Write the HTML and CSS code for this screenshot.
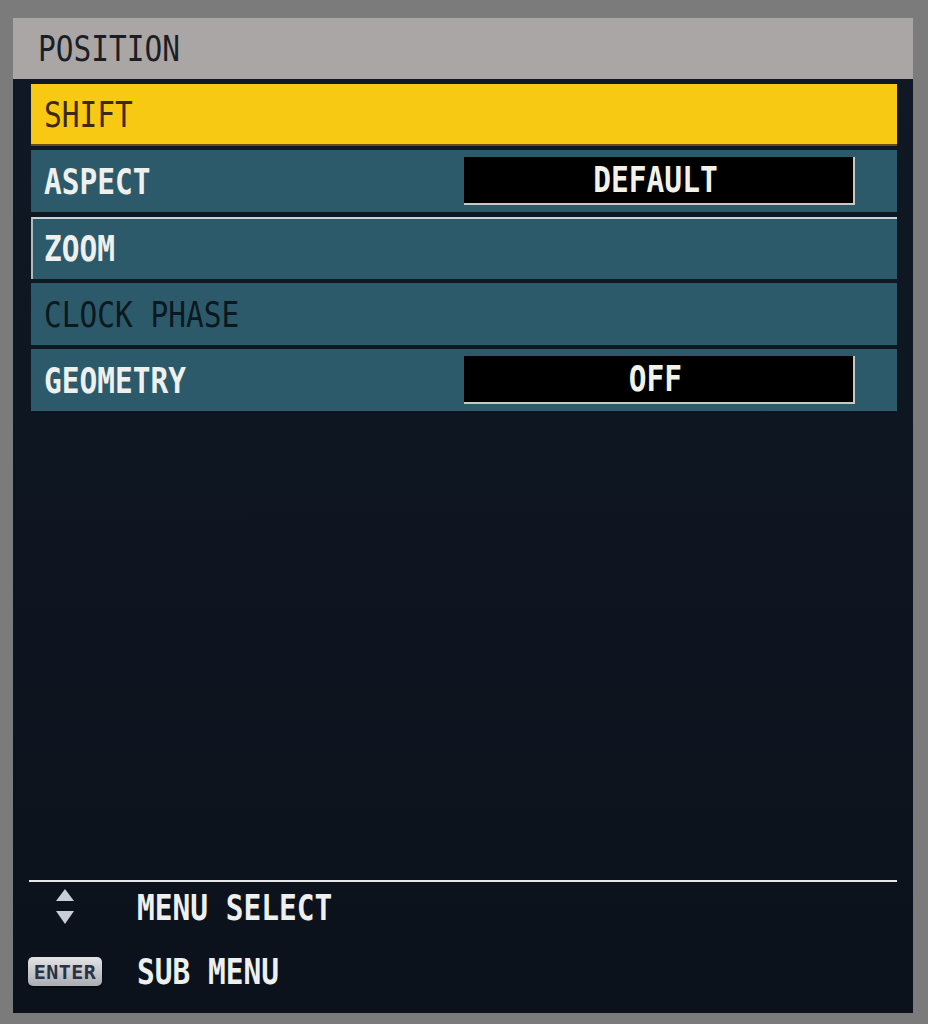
FILE: index.html
```html
<!DOCTYPE html>
<html lang="en">
<head>
  <meta charset="UTF-8" />
  <meta name="viewport" content="width=device-width, initial-scale=1.0"/>
  <title>Position | OSD Menu</title>
  <link rel="stylesheet" href="styles.css">
</head>
<body>
  <div class="osd-panel">
    <header class="osd-title">
      <span class="txt">POSITION</span>
    </header>

    <div class="osd-body">
      <ul class="menu-list">
        <li class="menu-item active"><span class="txt">SHIFT</span></li>
        <li class="menu-item">
          <span class="txt">ASPECT</span>
          <div class="value-box"><span class="txt">DEFAULT</span></div>
        </li>
        <li class="menu-item focus"><span class="txt">ZOOM</span></li>
        <li class="menu-item disabled"><span class="txt">CLOCK PHASE</span></li>
        <li class="menu-item">
          <span class="txt">GEOMETRY</span>
          <div class="value-box"><span class="txt">OFF</span></div>
        </li>
      </ul>

      <footer class="osd-help">
        <div class="help-row">
          <div class="help-icon">
            <svg width="18" height="36" viewBox="0 0 18 36">
              <polygon points="9,0 18,12 0,12" fill="#c9ced6"/>
              <polygon points="0,22 18,22 9,35" fill="#c9ced6"/>
            </svg>
          </div>
          <span class="txt">MENU SELECT</span>
        </div>
        <div class="help-row">
          <div class="help-icon">
            <span class="enter-key">ENTER</span>
          </div>
          <span class="txt">SUB MENU</span>
        </div>
      </footer>
    </div>
  </div>
</body>
</html>
```

FILE: styles.css
```css
* {
  box-sizing: border-box;
}

body {
  margin: 0;
  background: #7b7b7b;
  font-family: 'DejaVu Sans Mono', 'Liberation Mono', monospace;
  min-height: 1024px;
}

.txt {
  display: inline-block;
  font-size: 29.5px;
  line-height: 1;
  transform: scaleY(1.2);
  white-space: pre;
}

.osd-panel {
  margin: 18px 0 0 13px;
  width: 900px;
  height: 995px;
  display: flex;
  flex-direction: column;
  background: #0e1520;
}

.osd-title {
  height: 61px;
  background: #aba6a6;
  display: flex;
  align-items: center;
  padding: 2px 0 0 25px;
  color: #1c1e26;
}

.osd-body {
  flex: 1;
  display: flex;
  flex-direction: column;
  padding: 5px 16px 0 18px;
  background: linear-gradient(to bottom, #0f1824, #0c121c);
}

.menu-list {
  list-style: none;
  margin: 0;
  padding: 0;
  display: flex;
  flex-direction: column;
  gap: 4.3px;
}

.menu-item {
  height: 62px;
  display: flex;
  align-items: center;
  justify-content: space-between;
  padding: 3px 0 0 13px;
  background: #2c5a6a;
  color: #eef0ee;
  font-weight: bold;
}

.menu-item.active {
  background: #f8c912;
  color: #3d2a08;
  font-weight: normal;
  border-bottom: 2px solid #6b4a10;
}

.menu-item.focus {
  border-top: 2px solid #c9d4d6;
  border-left: 2px solid #aebcc0;
  padding-left: 11px;
}

.menu-item.disabled {
  color: #0b1820;
  font-weight: normal;
}

.value-box {
  width: 391px;
  height: 48px;
  margin: -3px 42px 0 0;
  padding-top: 1px;
  padding-right: 6px;
  background: #000;
  border-right: 2px solid #c9c9c0;
  border-bottom: 2px solid #c9c9c0;
  display: flex;
  align-items: center;
  justify-content: center;
  color: #f2f2e8;
}

.osd-help {
  margin-top: auto;
  margin-left: -2px;
  border-top: 2px solid #e6e8ec;
  padding: 2px 0 19px;
  display: flex;
  flex-direction: column;
  gap: 18px;
  color: #eef0f0;
  font-weight: bold;
}

.help-row {
  height: 46px;
  display: flex;
  align-items: center;
}

.help-row .txt {
  margin-top: 3px;
}

.help-icon {
  width: 72px;
  margin-right: 36px;
  display: flex;
  justify-content: center;
}

.enter-key {
  display: inline-block;
  padding: 5px 6px 4px;
  border-radius: 5px;
  background: linear-gradient(to bottom, #e4e4e6, #a9acb2);
  color: #2a3244;
  font-size: 20px;
  line-height: 1;
  letter-spacing: 0.5px;
  box-shadow: 0 2px 2px rgba(0, 0, 0, 0.5);
}
```
